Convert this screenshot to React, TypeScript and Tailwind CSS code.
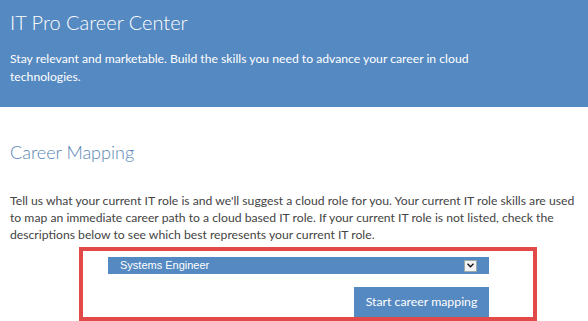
export default function App() {
  return (
    <div className="w-[588px] h-[321px] overflow-hidden bg-white font-['Lato',sans-serif]">
      <header className="h-[107px] bg-[#5589c1] px-[10px] pt-[8px] text-white">
        <h1 className="text-[20px] font-light leading-[28px]">IT Pro Career Center</h1>
        <p className="mt-[14px] max-w-[490px] text-[12.2px] leading-[18px]">
          Stay relevant and marketable. Build the skills you need to advance your career in cloud technologies.
        </p>
      </header>

      <main className="px-[10px] pt-[33px]">
        <h2 className="text-[18px] font-light leading-[24px] text-[#5a86b5]">Career Mapping</h2>
        <p className="mt-[28px] text-[12.2px] leading-[17px] text-[#444]">
          Tell us what your current IT role is and we'll suggest a cloud role for you. Your current IT role skills
          are used to map an immediate career path to a cloud based IT role. If your current IT role is not listed,
          check the descriptions below to see which best represents your current IT role.
        </p>

        <div className="ml-[69px] mt-[4px] h-[74px] w-[458px] border-4 border-[#e24a4a] pt-[6px] pl-[25px]">
          <div className="flex w-[381px] flex-col items-end gap-[13px]">
            <div className="flex h-[17px] w-full items-center justify-between bg-[#5589c1] pl-[12px] pr-[12px]">
              <span className="font-['Liberation_Sans',sans-serif] text-[11px] text-white">Systems Engineer</span>
              <span className="flex h-[12px] w-[13px] items-center justify-center border border-[#9aa] bg-[#f4f4f4]">
                <svg width="7" height="5" viewBox="0 0 7 5">
                  <path d="M0.5 0.8 L3.5 3.8 L6.5 0.8" fill="none" stroke="#111" strokeWidth="1.3" />
                </svg>
              </span>
            </div>
            <button className="h-[30px] w-[135px] bg-[#5589c1] text-[12.3px] text-white">Start career mapping</button>
          </div>
        </div>
      </main>
    </div>
  );
}
